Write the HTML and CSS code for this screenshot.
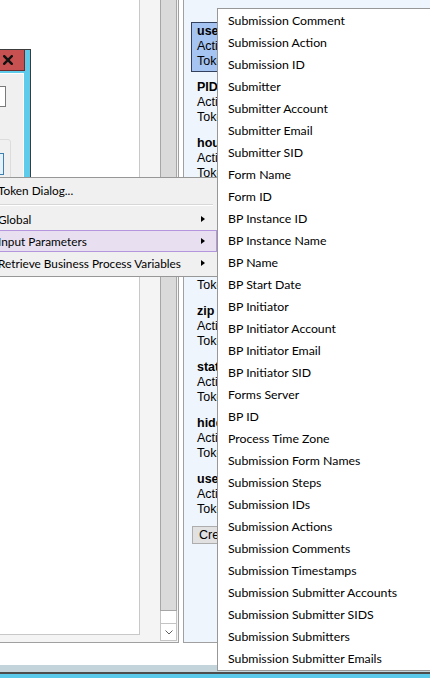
FILE: index.html
```html
<!DOCTYPE html>
<html>
<head>
<meta charset="utf-8">
<link rel="stylesheet" href="styles.css">
</head>
<body>
<div class="screen">
  <div class="workspace">
    <div class="listframe">
      <div class="listcontent">
        <div class="listwhite"></div>
      </div>
      <div class="vscroll">
        <div class="thumb"></div>
        <div class="track"></div>
        <div class="sbtn">
          <svg width="8" height="5" viewBox="0 0 8 5"><polyline points="0.5,0.5 4,4 7.5,0.5" fill="none" stroke="#606060" stroke-width="1"/></svg>
        </div>
      </div>
    </div>
    <div class="props">
      <div class="item selected"><div class="ititle">userName</div><div class="iline">Action: Input</div><div class="iline">Token: userName</div></div>
      <div class="item"><div class="ititle">PID</div><div class="iline">Action: Input</div><div class="iline">Token: PID</div></div>
      <div class="item"><div class="ititle">hours</div><div class="iline">Action: Input</div><div class="iline">Token: hours</div></div>
      <div class="item"><div class="ititle">city</div><div class="iline">Action: Input</div><div class="iline">Token: city</div></div>
      <div class="item"><div class="ititle">address</div><div class="iline">Action: Input</div><div class="iline">Token: address</div></div>
      <div class="item"><div class="ititle">zip</div><div class="iline">Action: Input</div><div class="iline">Token: zip</div></div>
      <div class="item"><div class="ititle">state</div><div class="iline">Action: Input</div><div class="iline">Token: state</div></div>
      <div class="item"><div class="ititle">hidden</div><div class="iline">Action: Input</div><div class="iline">Token: hidden</div></div>
      <div class="item"><div class="ititle">userEmail</div><div class="iline">Action: Input</div><div class="iline">Token: userEmail</div></div>
      <div class="createbtn">Create Token</div>
    </div>
  </div>
  <div class="statusarea"></div>
  <div class="strip"></div>
  <div class="darkline"></div>
  <div class="taskbar"></div>

  <div class="dialog">
    <div class="titlebar">
      <div class="closebtn">
        <svg width="10" height="10" viewBox="0 0 10 10"><path d="M1.2 1.2 L8.8 8.8 M8.8 1.2 L1.2 8.8" stroke="#111" stroke-width="2.4" stroke-linecap="square"/></svg>
      </div>
    </div>
    <div class="client">
      <div class="textbox"></div>
      <div class="groupbox">
        <div class="focusbtn"></div>
      </div>
    </div>
  </div>

  <div class="ctxmenu">
    <div class="mitem"><span>Token Dialog...</span></div>
    <div class="msep"></div>
    <div class="mitem"><span>Global</span><i class="arrow"></i></div>
    <div class="mitem hot"><span>Input Parameters</span><i class="arrow"></i></div>
    <div class="mitem"><span>Retrieve Business Process Variables</span><i class="arrow"></i></div>
  </div>

  <div class="submenu">
    <div class="sitem">Submission Comment</div>
    <div class="sitem">Submission Action</div>
    <div class="sitem">Submission ID</div>
    <div class="sitem">Submitter</div>
    <div class="sitem">Submitter Account</div>
    <div class="sitem">Submitter Email</div>
    <div class="sitem">Submitter SID</div>
    <div class="sitem">Form Name</div>
    <div class="sitem">Form ID</div>
    <div class="sitem">BP Instance ID</div>
    <div class="sitem">BP Instance Name</div>
    <div class="sitem">BP Name</div>
    <div class="sitem">BP Start Date</div>
    <div class="sitem">BP Initiator</div>
    <div class="sitem">BP Initiator Account</div>
    <div class="sitem">BP Initiator Email</div>
    <div class="sitem">BP Initiator SID</div>
    <div class="sitem">Forms Server</div>
    <div class="sitem">BP ID</div>
    <div class="sitem">Process Time Zone</div>
    <div class="sitem">Submission Form Names</div>
    <div class="sitem">Submission Steps</div>
    <div class="sitem">Submission IDs</div>
    <div class="sitem">Submission Actions</div>
    <div class="sitem">Submission Comments</div>
    <div class="sitem">Submission Timestamps</div>
    <div class="sitem">Submission Submitter Accounts</div>
    <div class="sitem">Submission Submitter SIDS</div>
    <div class="sitem">Submission Submitters</div>
    <div class="sitem">Submission Submitter Emails</div>
  </div>
</div>
</body>
</html>
```

FILE: styles.css
```css
* { box-sizing: border-box; }
html, body { margin: 0; padding: 0; }
body { width: 430px; height: 678px; overflow: hidden; background: #fff; font-family: "Liberation Sans", Arial, sans-serif; color: #000; }

.screen { position: relative; width: 430px; height: 678px; overflow: hidden; }

.workspace { display: flex; height: 643px; }

.listframe { width: 179px; height: 643px; display: flex; background: #f4f4f4; border-right: 1px solid #a0a0a0; border-bottom: 1px solid #a0a0a0; }
.listcontent { width: 160px; }
.listwhite { width: 140px; height: 635px; background: #fff; border-right: 1px solid #c8c8c8; border-bottom: 1px solid #c8c8c8; }

.vscroll { width: 17px; height: 641px; display: flex; flex-direction: column; background: #fff; }
.thumb { flex: 1; background: #dadada; border: 1px solid #a6a6a6; border-top: none; }
.track { height: 12px; border-left: 1px solid #c4c4c4; border-right: 1px solid #c4c4c4; }
.sbtn { height: 18px; border: 1px solid #c4c4c4; display: flex; align-items: center; justify-content: center; padding-top: 1px; }
.sbtn svg { display: block; }

.props { flex: 1; margin-left: 4px; height: 643px; background: #eef5fd; border-left: 1px solid #a0a0a0; border-bottom: 1px solid #a0a0a0; padding: 22px 0 0 7px; display: flex; flex-direction: column; gap: 6px; }
.item { width: 200px; height: 50px; border: 1px solid transparent; padding: 1px 5px 2px; font-size: 12.5px; line-height: 15px; white-space: nowrap; }
.item.selected { background: #a6c4f2; border-color: #33415e; }
.ititle { font-weight: bold; }
.createbtn { width: 80px; height: 18px; margin-left: 1px; background: #e1e1e1; border: 1px solid #adadad; font-size: 12.5px; line-height: 16px; padding-left: 6px; white-space: nowrap; }

.statusarea { height: 22px; background: #fff; }
.strip { height: 7px; background: #c3d4da; }
.darkline { height: 2px; background: #4d4d4d; }
.taskbar { height: 4px; background: #5bc9ea; }

.dialog { position: absolute; left: -200px; top: 49px; width: 231px; height: 150px; background: #5ecbea; border-top: 1px solid #3c3c3c; border-right: 1px solid #3c3c3c; display: flex; flex-direction: column; }
.titlebar { height: 29px; display: flex; justify-content: flex-end; align-items: flex-start; padding-right: 5px; }
.closebtn { width: 45px; height: 21px; background: #c75050; border: 1px solid #6e2b2b; border-top: none; display: flex; align-items: center; justify-content: flex-end; padding-right: 11px; }
.closebtn svg { display: block; }
.client { flex: 1; margin-right: 6px; background: #f0f0f0; border-top: 1px solid #fff; border-right: 1px solid #fff; display: flex; flex-direction: column; align-items: flex-end; }
.textbox { width: 120px; height: 21px; margin-top: 12px; margin-right: 17px; background: #fff; border: 1px solid #7a7a7a; }
.groupbox { width: 150px; height: 60px; margin-top: 32px; margin-right: 12px; border: 1px solid #dcdcdc; border-radius: 3px; padding-top: 13px; display: flex; flex-direction: column; align-items: flex-end; }
.focusbtn { width: 100px; height: 22px; margin-right: 6px; background: #e5f1fb; border: 1px solid #3c7fb1; }

.ctxmenu { position: absolute; left: -30px; top: 177px; width: 250px; background: #f0f0f0; border: 1px solid #979797; padding: 1px 0 2px; font-family: Lato, "Liberation Sans", sans-serif; font-size: 11.8px; }
.mitem { height: 22px; margin-right: 2px; padding: 0 11px 0 26px; display: flex; align-items: center; justify-content: space-between; border: 1px solid transparent; white-space: nowrap; }
.mitem.hot { background: #e8e0f1; border-color: #b496de; }
.arrow { display: block; width: 0; height: 0; border-left: 4px solid #000; border-top: 3.5px solid transparent; border-bottom: 3.5px solid transparent; }
.msep { height: 7px; margin-right: 6px; padding-top: 3px; }
.msep::before { content: ""; display: block; height: 1px; background: #d7d7d7; border-bottom: 1px solid #fff; box-sizing: content-box; }

.submenu { position: absolute; left: 217px; top: 8px; width: 230px; background: #fff; border: 1px solid #979797; padding: 0 0 1px; font-family: Lato, "Liberation Sans", sans-serif; font-size: 12.3px; }
.sitem { height: 22px; line-height: 23px; padding-left: 10px; white-space: nowrap; }
```
